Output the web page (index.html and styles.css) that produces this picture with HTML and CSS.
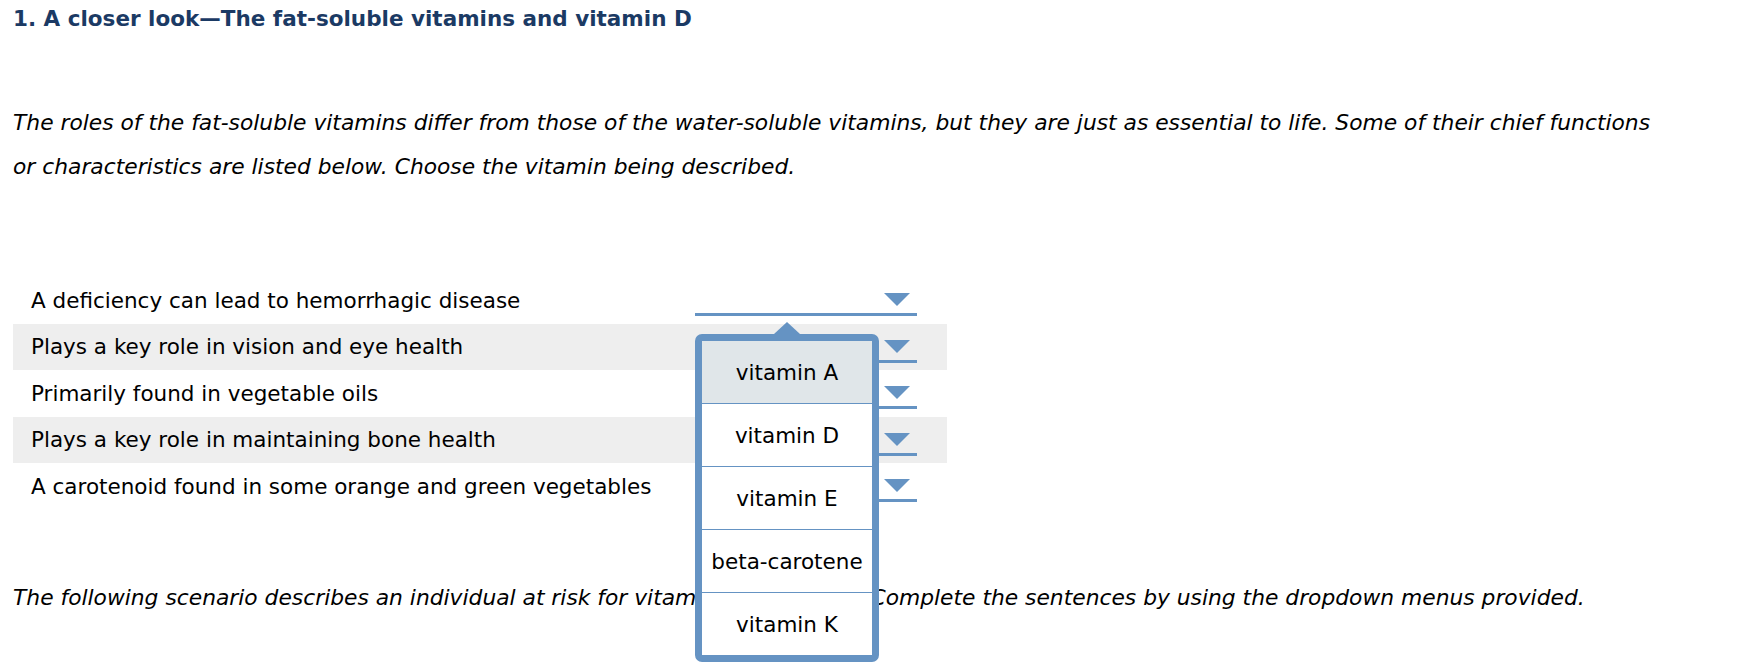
FILE: index.html
```html
<!DOCTYPE html>
<html lang="en">
<head>
    <meta charset="UTF-8">
    <title>A closer look</title>
    <link rel="stylesheet" href="styles.css">
</head>
<body>
    <div class="question">
        <h1 class="question-title">1. A closer look—The fat-soluble vitamins and vitamin D</h1>

        <p class="prompt">The roles of the fat-soluble vitamins differ from those of the water-soluble vitamins, but they are just as essential to life. Some of their chief functions or characteristics are listed below. Choose the vitamin being described.</p>

        <div class="match-table">
            <div class="match-row">
                <span class="match-label">A deficiency can lead to hemorrhagic disease</span>
                <div class="select-box"><span class="select-arrow"></span></div>
            </div>
            <div class="match-row shaded">
                <span class="match-label">Plays a key role in vision and eye health</span>
                <div class="select-box"><span class="select-arrow"></span></div>
            </div>
            <div class="match-row">
                <span class="match-label">Primarily found in vegetable oils</span>
                <div class="select-box"><span class="select-arrow"></span></div>
            </div>
            <div class="match-row shaded">
                <span class="match-label">Plays a key role in maintaining bone health</span>
                <div class="select-box"><span class="select-arrow"></span></div>
            </div>
            <div class="match-row">
                <span class="match-label">A carotenoid found in some orange and green vegetables</span>
                <div class="select-box"><span class="select-arrow"></span></div>
            </div>
        </div>

        <p class="prompt scenario">The following scenario describes an individual at risk for vitamin D deficiency. Complete the sentences by using the dropdown menus provided.</p>

        <div class="dropdown-menu">
            <span class="dropdown-notch"></span>
            <div class="dropdown-option selected">vitamin A</div>
            <div class="dropdown-option">vitamin D</div>
            <div class="dropdown-option">vitamin E</div>
            <div class="dropdown-option">beta-carotene</div>
            <div class="dropdown-option">vitamin K</div>
        </div>
    </div>
</body>
</html>
```

FILE: styles.css
```css
* {
    margin: 0;
    padding: 0;
    box-sizing: border-box;
}
html, body {
    height: 100%;
}
body {
    font-family: "DejaVu Sans", Verdana, sans-serif;
    background-color: #fff;
    color: #000;
}
.question {
    position: relative;
    min-height: 672px;
    padding: 7px 0 0 13px;
}
.question-title {
    font-size: 21.5px;
    line-height: 24px;
    font-weight: bold;
    color: #1b3a64;
}
.prompt {
    font-size: 21.8px;
    font-style: italic;
    line-height: 44px;
    margin-top: 70px;
    width: 1660px;
}
.match-table {
    margin-top: 88px;
    width: 934px;
}
.match-row {
    display: flex;
    align-items: center;
    height: 46.5px;
    padding: 0 30px 0 18px;
    font-size: 21.5px;
}
.match-row.shaded {
    background: #eeeeee;
}
.match-label {
    flex: 1;
}
.select-box {
    position: relative;
    width: 222px;
    height: 39px;
    align-self: flex-start;
    border-bottom: 3px solid #6593c3;
}
.select-arrow {
    position: absolute;
    top: 16px;
    right: 7px;
    border-left: 13px solid transparent;
    border-right: 13px solid transparent;
    border-top: 13px solid #6593c3;
}
.scenario {
    margin-top: 66px;
}
.dropdown-menu {
    position: absolute;
    left: 695px;
    top: 334px;
    width: 184px;
    border: 7px solid #6593c3;
    border-radius: 7px;
    background: #fff;
}
.dropdown-notch {
    position: absolute;
    top: -19px;
    left: 72px;
    border-left: 13px solid transparent;
    border-right: 13px solid transparent;
    border-bottom: 12px solid #6593c3;
}
.dropdown-option {
    height: 63px;
    display: flex;
    align-items: center;
    justify-content: center;
    font-size: 21.5px;
    border-bottom: 1px solid #6593c3;
}
.dropdown-option:last-child {
    height: 62px;
    border-bottom: none;
}
.dropdown-option.selected {
    background: #e0e6e9;
}
```
